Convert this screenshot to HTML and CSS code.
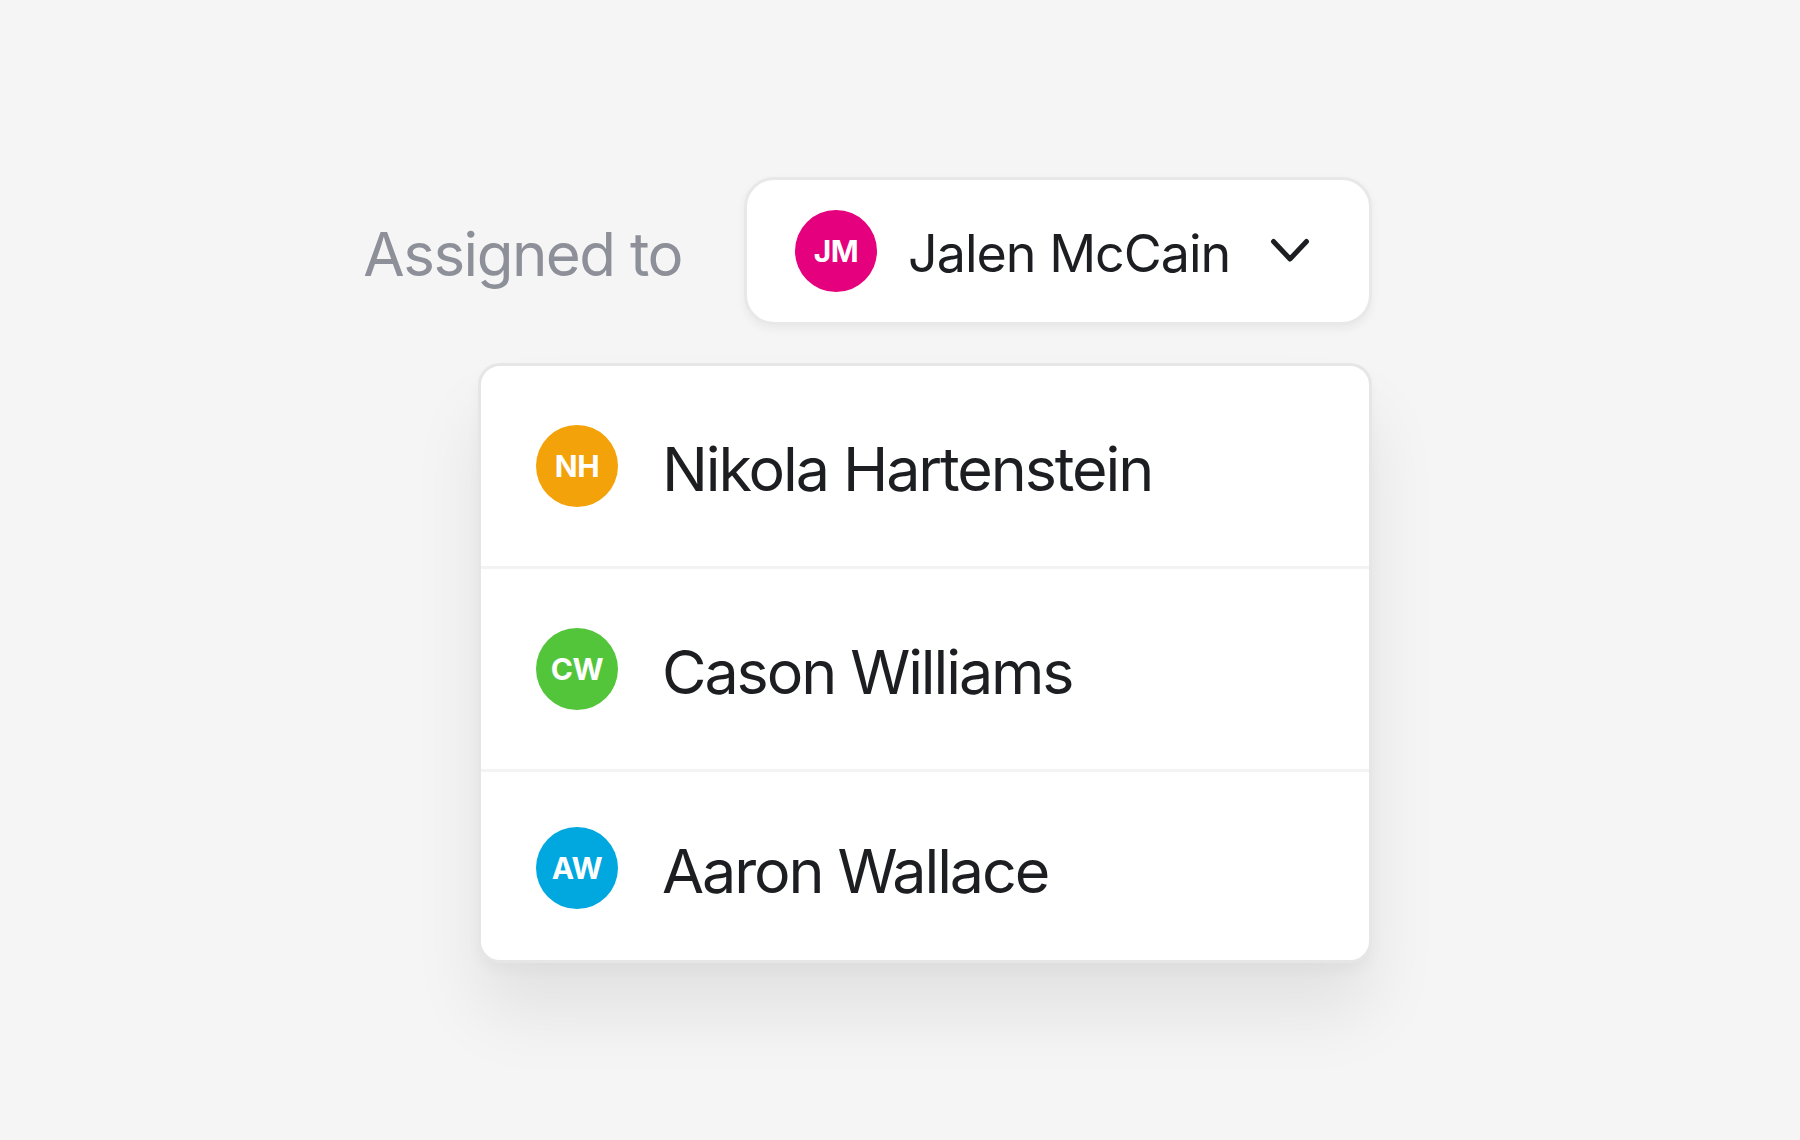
FILE: index.html
```html
<!DOCTYPE html>
<html lang="en">
<head>
<meta charset="utf-8">
<title>Assigned to</title>
<link rel="stylesheet" href="styles.css">
</head>
<body>
<div class="scene">
  <div class="field">
    <span class="label">Assigned to</span>
    <button class="select" type="button">
      <span class="avatar avatar-jm">JM</span>
      <span class="select-name">Jalen McCain</span>
      <svg class="chevron" width="40" height="26" viewBox="0 0 40 26" aria-hidden="true">
        <path d="M3.5 3.5 L20 21 L36.5 3.5" fill="none" stroke="#1d1e22" stroke-width="5" stroke-linecap="round" stroke-linejoin="round"/>
      </svg>
    </button>
  </div>
  <ul class="menu">
    <li class="option"><span class="avatar avatar-nh">NH</span><span class="option-name">Nikola Hartenstein</span></li>
    <li class="option"><span class="avatar avatar-cw">CW</span><span class="option-name">Cason Williams</span></li>
    <li class="option"><span class="avatar avatar-aw">AW</span><span class="option-name">Aaron Wallace</span></li>
  </ul>
</div>
</body>
</html>
```

FILE: styles.css
```css
html, body {
  margin: 0;
  padding: 0;
  background: #f5f5f5;
}

body {
  font-family: Inter, "Noto Sans", sans-serif;
  color: #1d1e22;
  height: 1140px;
  overflow: hidden;
}

.scene {
  width: 1372px;
  padding-top: 177px;
  display: flex;
  flex-direction: column;
  align-items: flex-end;
}

.field {
  display: flex;
  align-items: center;
  gap: 62px;
}

.label {
  font-size: 60px;
  color: #8e9099;
  letter-spacing: -1.5px;
  padding-top: 5px;
}

.select {
  box-sizing: border-box;
  width: 628px;
  height: 148px;
  display: flex;
  align-items: center;
  padding: 0 0 0 48px;
  background: #ffffff;
  border: 3px solid #e8e8e8;
  border-radius: 30px;
  box-shadow: 0 4px 10px rgba(0, 0, 0, 0.05);
  font-family: inherit;
  color: inherit;
  cursor: pointer;
}

.select-name {
  margin-left: 31px;
  padding-top: 4px;
  font-size: 52px;
  letter-spacing: -1px;
  white-space: nowrap;
}

.chevron {
  margin-left: 40px;
  flex: none;
}

.avatar {
  flex: none;
  width: 82px;
  height: 82px;
  border-radius: 50%;
  display: flex;
  align-items: center;
  justify-content: center;
  color: #ffffff;
  font-family: Inter, "Noto Sans", sans-serif;
  font-weight: 700;
  font-size: 30px;
  letter-spacing: -0.5px;
}

.avatar-jm { background: #e5007d; }
.avatar-nh { background: #f4a209; }
.avatar-cw { background: #53c53b; }
.avatar-aw { background: #00a8df; }

.menu {
  box-sizing: border-box;
  width: 894px;
  margin: 38px 0 0 0;
  padding: 0;
  list-style: none;
  background: #ffffff;
  border: 3px solid #e6e6e6;
  border-radius: 22px;
  overflow: hidden;
  box-shadow: 0 50px 70px rgba(0, 0, 0, 0.08), 0 8px 14px rgba(0, 0, 0, 0.03);
}

.option {
  height: 200px;
  display: flex;
  align-items: center;
  gap: 44px;
  padding-left: 55px;
  border-bottom: 3px solid #f3f3f3;
}

.option:last-child {
  height: 188px;
  border-bottom: none;
  padding-top: 4px;
  box-sizing: border-box;
}

.option-name {
  font-size: 61px;
  padding-top: 6px;
  letter-spacing: -2.1px;
  white-space: nowrap;
}
```
